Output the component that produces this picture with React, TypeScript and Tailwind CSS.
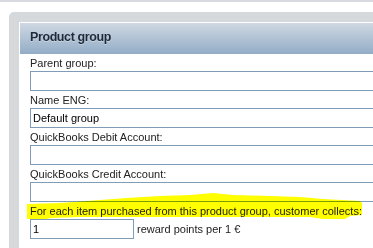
import React from "react";

const Field = ({ label, value }: { label: string; value?: string }) => (
  <div>
    <div className="pt-[3px] pb-[1px] h-[17px] leading-[13px]">{label}</div>
    <div className="h-[20px] border border-[#7f9db9] bg-white w-[400px] pl-[2px] leading-[18px] text-black">
      {value}
    </div>
  </div>
);

export default function App() {
  return (
    <div className="relative w-[373px] h-[248px] overflow-hidden bg-white font-['Liberation_Sans',Arial,sans-serif] text-[11px] text-[#222]">
      <div className="h-[2px] bg-[#d9dadf]" />
      <div className="ml-[9px] mt-[10px] w-[420px] h-[300px] rounded-tl-[5px] bg-[#d5d9dc] pl-[10px] pt-[10px]">
        <div className="h-full border-t border-l border-white bg-white">
          <div className="h-[31px] bg-gradient-to-b from-[#cfd8e2] to-[#93adc7] pl-[10px] pt-[6px] text-[12.5px] font-bold leading-[16px] tracking-[-0.4px] text-[#1f2a38] [text-shadow:0_1px_0_rgba(255,255,255,0.35)]">
            Product group
          </div>
          <div className="pl-[10px]">
            <Field label="Parent group:" />
            <Field label="Name ENG:" value="Default group" />
            <Field label="QuickBooks Debit Account:" />
            <Field label="QuickBooks Credit Account:" />
            <div className="pt-[3px] pb-[1px] h-[17px] leading-[13px]">
              For each item purchased from this product group, customer collects:
            </div>
            <div className="flex items-center">
              <div className="h-[20px] w-[104px] border border-[#7f9db9] bg-white pl-[2px] leading-[18px] text-black">
                1
              </div>
              <span className="ml-[3px] leading-[13px]">reward points per 1 €</span>
            </div>
          </div>
        </div>
      </div>
      <svg
        className="absolute left-0 top-0 mix-blend-multiply pointer-events-none"
        width="373"
        height="248"
        viewBox="0 0 373 248"
      >
        <polygon
          fill="#ffff00"
          points="27,204 60,203 100,200 127,198 160,196 190,195 213,193 233,195 270,196 300,197 323,199 360,201 362,203 362,215 350,216 345,219 323,219 310,217 250,217 200,217 160,217 120,217 80,217 52,218 45,219 27,219"
        />
      </svg>
    </div>
  );
}
